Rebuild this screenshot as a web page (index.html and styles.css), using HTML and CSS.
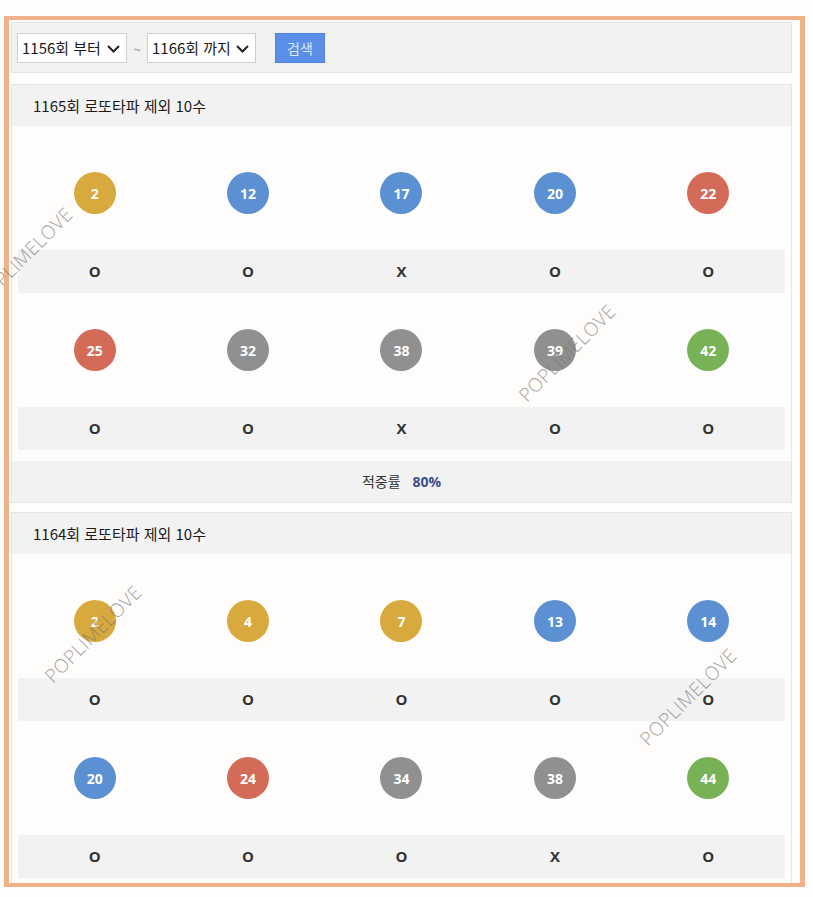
FILE: index.html
```html
<!DOCTYPE html>
<html lang="ko">
<head>
<meta charset="utf-8">
<title>로또타파 제외수</title>
<link rel="stylesheet" href="styles.css">
</head>
<body>
<div class="frame">
  <div class="searchbar">
    <div class="sel sel-from">
      <select><option>1156회 부터</option></select>
      <svg class="chev" viewBox="0 0 13 8" width="13" height="8"><path d="M1 1 L6.5 6.5 L12 1" fill="none" stroke="#222" stroke-width="2"/></svg>
    </div>
    <span class="tilde">~</span>
    <div class="sel sel-to">
      <select><option>1166회 까지</option></select>
      <svg class="chev" viewBox="0 0 13 8" width="13" height="8"><path d="M1 1 L6.5 6.5 L12 1" fill="none" stroke="#222" stroke-width="2"/></svg>
    </div>
    <button class="btn">검색</button>
  </div>

  <section class="panel">
    <div class="panel-head">1165회 로또타파 제외 10수</div>
    <div class="panel-body">
      <div class="balls">
        <div class="cell"><span class="ball y">2</span></div>
        <div class="cell"><span class="ball b">12</span></div>
        <div class="cell"><span class="ball b">17</span></div>
        <div class="cell"><span class="ball b">20</span></div>
        <div class="cell"><span class="ball r">22</span></div>
      </div>
      <div class="results">
        <div class="res">O</div><div class="res">O</div><div class="res">X</div><div class="res">O</div><div class="res">O</div>
      </div>
      <div class="balls">
        <div class="cell"><span class="ball r">25</span></div>
        <div class="cell"><span class="ball g">32</span></div>
        <div class="cell"><span class="ball g">38</span></div>
        <div class="cell"><span class="ball g">39</span></div>
        <div class="cell"><span class="ball gr">42</span></div>
      </div>
      <div class="results">
        <div class="res">O</div><div class="res">O</div><div class="res">X</div><div class="res">O</div><div class="res">O</div>
      </div>
    </div>
    <div class="rate">적중률 <b>80%</b></div>
  </section>

  <section class="panel">
    <div class="panel-head">1164회 로또타파 제외 10수</div>
    <div class="panel-body">
      <div class="balls">
        <div class="cell"><span class="ball y">2</span></div>
        <div class="cell"><span class="ball y">4</span></div>
        <div class="cell"><span class="ball y">7</span></div>
        <div class="cell"><span class="ball b">13</span></div>
        <div class="cell"><span class="ball b">14</span></div>
      </div>
      <div class="results">
        <div class="res">O</div><div class="res">O</div><div class="res">O</div><div class="res">O</div><div class="res">O</div>
      </div>
      <div class="balls">
        <div class="cell"><span class="ball b">20</span></div>
        <div class="cell"><span class="ball r">24</span></div>
        <div class="cell"><span class="ball g">34</span></div>
        <div class="cell"><span class="ball g">38</span></div>
        <div class="cell"><span class="ball gr">44</span></div>
      </div>
      <div class="results">
        <div class="res">O</div><div class="res">O</div><div class="res">O</div><div class="res">X</div><div class="res">O</div>
      </div>
    </div>
  </section>
</div>

<div class="wm wm1">POPLIMELOVE</div>
<div class="wm wm2">POPLIMELOVE</div>
<div class="wm wm3">POPLIMELOVE</div>
<div class="wm wm4">POPLIMELOVE</div>
</body>
</html>
```

FILE: styles.css
```css
html, body {
  margin: 0;
  padding: 0;
  background: #fffdfb;
}
body {
  font-family: "Noto Sans CJK KR", "Noto Sans", sans-serif;
  color: #222;
  position: relative;
  width: 813px;
  height: 897px;
  overflow: hidden;
}
.frame {
  box-sizing: border-box;
  margin: 16px 0 0 4px;
  width: 801px;
  height: 871px;
  border-style: solid;
  border-color: #f0b088;
  border-width: 4px 5px;
  background: #fffdfb;
  padding: 2px 0 0 2px;
  overflow: hidden;
}
.searchbar {
  box-sizing: border-box;
  width: 781px;
  height: 51px;
  background: #f2f2f2;
  border: 1px solid #e3e3e3;
  padding: 10px 0 0 5px;
  display: flex;
  align-items: flex-start;
}
.sel {
  position: relative;
  height: 30px;
}
.sel-from { width: 110px; }
.sel-to { width: 109px; }
.sel select {
  appearance: none;
  -webkit-appearance: none;
  box-sizing: border-box;
  width: 100%;
  height: 30px;
  border: 1px solid #cfcfcf;
  background: #fff;
  font-family: "Noto Sans CJK KR", sans-serif;
  font-size: 15px;
  color: #1a1a1a;
  padding: 0 0 0 4px;
  margin: 0;
  border-radius: 0;
  line-height: 28px;
}
.chev {
  position: absolute;
  right: 7px;
  top: 12px;
  pointer-events: none;
}
.tilde {
  width: 20px;
  text-align: center;
  font-size: 13px;
  color: #888;
  line-height: 30px;
  padding-top: 2px;
}
.btn {
  box-sizing: border-box;
  margin-left: 19px;
  width: 50px;
  height: 30px;
  background: #5b8ee6;
  border: 1px solid #4f84de;
  color: #dce8fb;
  font-family: "Noto Sans CJK KR", sans-serif;
  font-size: 14px;
  padding: 0;
  border-radius: 0;
  line-height: 28px;
}
.panel {
  box-sizing: border-box;
  width: 781px;
  margin-top: 11px;
  border: 1px solid #e6e6e6;
  background: #fffdfb;
}
.panel + .panel {
  margin-top: 9px;
}
.panel-head {
  height: 41px;
  line-height: 41px;
  background: #f2f2f2;
  padding-left: 21px;
  font-size: 15px;
  color: #1a1a1a;
}
.panel-body {
  padding: 10px 6px 11px;
}
.balls, .results {
  display: grid;
  grid-template-columns: repeat(5, 1fr);
}
.cell {
  height: 114px;
  display: flex;
  align-items: center;
  justify-content: center;
}
.ball {
  width: 42px;
  height: 42px;
  border-radius: 50%;
  display: flex;
  align-items: center;
  justify-content: center;
  color: #fff;
  font-family: "Open Sans", sans-serif;
  font-weight: 700;
  font-size: 14px;
}
.ball.y { background: #d8a93c; }
.ball.b { background: #5b90d3; }
.ball.r { background: #d46b59; }
.ball.g { background: #909090; }
.ball.gr { background: #77b257; }
.results {
  height: 43px;
  background: #f2f2f2;
}
.res {
  text-align: center;
  line-height: 43px;
  font-family: "Open Sans", sans-serif;
  font-weight: 700;
  font-size: 15px;
  color: #333;
}
.rate {
  height: 41px;
  line-height: 41px;
  background: #f2f2f2;
  text-align: center;
  font-size: 14px;
  color: #333;
}
.rate b {
  font-family: "Open Sans", sans-serif;
  font-weight: 700;
  color: #3e4f8c;
  margin-left: 8px;
}
.wm {
  position: absolute;
  width: 0;
  height: 0;
  pointer-events: none;
  font-family: "Open Sans", sans-serif;
  font-weight: 300;
  font-size: 19px;
  letter-spacing: 0.3px;
  color: rgba(120, 120, 120, 0.7);
  white-space: nowrap;
  line-height: 0;
  display: flex;
  align-items: center;
  justify-content: center;
  transform: rotate(-45deg);
}
.wm1 { left: 24px; top: 256px; }
.wm2 { left: 567px; top: 353px; }
.wm3 { left: 93px; top: 634px; }
.wm4 { left: 688px; top: 697px; }
```
